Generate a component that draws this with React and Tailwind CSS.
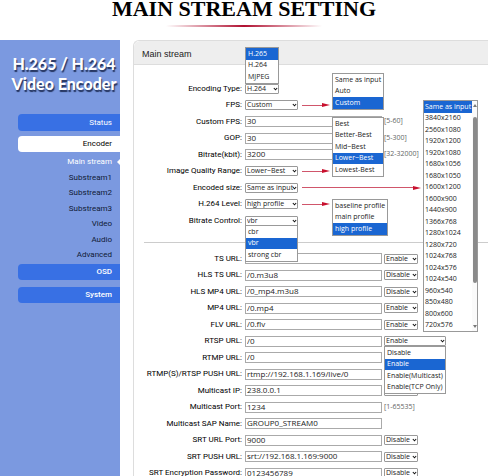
import React from 'react';
import { clsx } from 'clsx';

const SIZES = [
  'Same as input', '3840x2160', '2560x1080', '1920x1200', '1920x1080', '1680x1056', '1680x1050',
  '1600x1200', '1600x900', '1440x900', '1366x768', '1280x1024', '1280x720', '1024x768',
  '1024x576', '1024x540', '960x540', '850x480', '800x600', '720x576',
];

const SUB_PAGES = ['Main stream', 'Substream1', 'Substream2', 'Substream3', 'Video', 'Audio', 'Advanced'];

const OUTPUTS = [
  { id: 'ts', label: 'TS URL:', value: '', state: 'Enable' },
  { id: 'hls-ts', label: 'HLS TS URL:', value: '/0.m3u8', state: 'Disable' },
  { id: 'hls-mp4', label: 'HLS MP4 URL:', value: '/0_mp4.m3u8', state: 'Disable' },
  { id: 'mp4', label: 'MP4 URL:', value: '/0.mp4', state: 'Enable' },
  { id: 'flv', label: 'FLV URL:', value: '/0.flv', state: 'Enable' },
  { id: 'rtsp', label: 'RTSP URL:', value: '/0', state: 'Enable', open: true },
  { id: 'rtmp', label: 'RTMP URL:', value: '/0' },
  { id: 'push', label: 'RTMP(S)/RTSP PUSH URL:', value: 'rtmp://192.168.1.169/live/0' },
  { id: 'mc-ip', label: 'Multicast IP:', value: '238.0.0.1', state: 'Disable' },
  { id: 'mc-port', label: 'Multicast Port:', value: '1234', hint: '[1-65535]' },
  { id: 'mc-sap', label: 'Multicast SAP Name:', value: 'GROUP0_STREAM0' },
  { id: 'srt-port', label: 'SRT URL Port:', value: '9000', state: 'Disable' },
  { id: 'srt-push', label: 'SRT PUSH URL:', value: 'srt://192.168.1.169:9000', state: 'Disable' },
  { id: 'srt-pass', label: 'SRT Encryption Password:', value: '0123456789', state: 'Disable' },
];

const Row = ({ id, label, children }) => (
  <div className="flex h-4 items-center gap-[3px] odd:h-[17px]">
    <label htmlFor={id} className="w-[108px] shrink-0 whitespace-nowrap text-right font-['Roboto',sans-serif] text-[8px] text-black">
      {label}
    </label>
    <div className="relative flex h-full items-center">{children}</div>
  </div>
);

const Field = ({ id, value }) => (
  <input
    id={id}
    defaultValue={value}
    className="h-[11px] w-[137px] shrink-0 border border-[#aaa] bg-white px-px pb-[2px] text-[8px] leading-[8px] text-[#222] outline-none"
  />
);

const Select = ({ id, value, options, className, ...rest }) => (
  <div className={clsx('relative shrink-0', className)}>
    <select
      id={id}
      defaultValue={value}
      className="block h-[10px] w-full appearance-none rounded-[1px] border border-[#999] bg-white pl-px text-[7px] leading-[8px] text-[#222] outline-none"
      {...rest}
    >
      {options.map((o) => <option key={o}>{o}</option>)}
    </select>
    <svg viewBox="0 0 6 4" className="pointer-events-none absolute top-[3px] right-px h-1 w-[5px]" fill="none" stroke="#111" strokeWidth="1.3">
      <path d="M1 .8 3 2.9 5 .8" />
    </svg>
  </div>
);

const OptionList = ({ options, selected, className, scroll }) => (
  <div className={clsx('absolute z-10 flex border border-[#999] bg-white', className)}>
    <ul role="listbox" className="min-w-0 flex-1">
      {options.map((o) => (
        <li
          key={o}
          role="option"
          aria-selected={o === selected}
          className={clsx(
            'flex h-[11px] items-center whitespace-nowrap text-[7px] odd:h-3',
            scroll ? 'pl-px' : 'pl-[2px]',
            o === selected ? 'bg-[#1a66d2] text-white' : 'text-[#222]'
          )}
        >
          {o}
        </li>
      ))}
    </ul>
    {scroll && (
      <div className="flex w-[5px] shrink-0 flex-col items-center justify-between bg-[#fafafa] py-[3px]">
        <svg viewBox="0 0 4 3" className="h-[3px] w-1" fill="#777"><path d="M2 0 4 3H0z" /></svg>
        <div className="mb-auto mt-[10px] h-[74%] w-1 rounded-full bg-[#8a8a8a]" />
        <svg viewBox="0 0 4 3" className="h-[3px] w-1" fill="#777"><path d="M2 3 0 0h4z" /></svg>
      </div>
    )}
  </div>
);

const Arrow = ({ className }) => (
  <div className={clsx('ml-1 flex shrink-0 items-center', className)}>
    <div className="h-px flex-1 bg-[#d0566b]" />
    <svg viewBox="0 0 8 4" className="h-1 w-2" fill="#c8102e"><path d="M0 0 8 2 0 4z" /></svg>
  </div>
);

const Hint = ({ children }) => <span className="ml-[2px] text-[7px] text-[#666]">{children}</span>;

const Sidebar = () => (
  <nav className="flex w-[120px] shrink-0 flex-col bg-[#7b99e0] font-['Roboto',sans-serif] text-[8px] text-[#101a35]">
    <div className="pt-[14px] pl-2 text-center font-['Lato',sans-serif] text-base leading-5 font-black whitespace-nowrap text-white [text-shadow:1px_2px_1px_#24345f]">
      <p>H.265 / H.264</p>
      <p>Video Encoder</p>
    </div>
    <div className="mt-5 ml-[18px] flex flex-col">
      <a href="#status" className="flex h-[17px] items-center justify-end rounded-l-sm bg-[#3870e4] pr-2 text-white">Status</a>
      <a href="#encoder" className="mt-[5px] flex h-4 items-center justify-end rounded-l-sm bg-white pr-2 text-black">Encoder</a>
      <ul className="pt-[2px]">
        {SUB_PAGES.map((page, i) => (
          <li key={page} className="flex h-[15px] items-center justify-end odd:h-4">
            <a href={'#' + page} className={clsx('pr-2', i === 0 && 'relative text-white')}>
              {page}
              {i === 0 && (
                <svg viewBox="0 0 3 6" className="absolute top-[3px] right-0 h-[6px] w-[3px]" fill="#fff"><path d="M3 0v6L0 3z" /></svg>
              )}
            </a>
          </li>
        ))}
      </ul>
      <a href="#osd" className="mt-px flex h-4 items-center justify-end rounded-l-sm bg-[#3870e4] pr-2 font-medium text-white">OSD</a>
      <a href="#system" className="mt-[7px] flex h-4 items-center justify-end rounded-l-sm bg-[#3870e4] pr-2 font-medium text-white">System</a>
    </div>
  </nav>
);

export default function App() {
  return (
    <div className="flex h-screen flex-col overflow-hidden bg-white font-['Open_Sans',sans-serif]">
      <header className="flex h-10 shrink-0 flex-col items-center">
        <h1 className="whitespace-nowrap font-['Liberation_Serif',serif] text-[22px] leading-[18px] font-bold text-black">MAIN STREAM SETTING</h1>
        <div className="mt-[7px] h-[2px] w-[156px] bg-linear-to-r from-transparent via-[#b01030] to-transparent" />
      </header>

      <div className="flex min-h-0 flex-1">
        <Sidebar />
        <main className="ml-[13px] min-w-0 flex-1 rounded-tl-md border-t border-l border-[#ddd]">
          <h2 className="flex h-6 items-center rounded-tl-md border-b border-[#ddd] bg-[#eee] pt-1 pl-2 font-['Liberation_Sans',sans-serif] text-[9px] text-[#222]">Main stream</h2>

          <form>
            <div className="pt-[15px]">
              <Row id="codec" label="Encoding Type:">
                <Select id="codec" value="H.264" options={['H.265', 'H.264', 'MJPEG']} className="w-[34px]" />
                <OptionList options={['H.265', 'H.264', 'MJPEG']} selected="H.265" className="bottom-[13px] left-0 w-[34px]" />
              </Row>
              <Row id="fps" label="FPS:">
                <Select id="fps" value="Custom" options={['Same as input', 'Auto', 'Custom']} className="w-[53px]" />
                <Arrow className="w-7" />
                <OptionList options={['Same as input', 'Auto', 'Custom']} selected="Custom" className="bottom-[3px] left-[87px] w-[52px]" />
              </Row>
              <Row id="custom-fps" label="Custom FPS:">
                <Field id="custom-fps" value="30" />
                <Hint>[5-60]</Hint>
              </Row>
              <Row id="gop" label="GOP:">
                <Field id="gop" value="30" />
                <Hint>[5-300]</Hint>
              </Row>
              <Row id="bitrate" label="Bitrate(kbit):">
                <Field id="bitrate" value="3200" />
                <Hint>[32-32000]</Hint>
              </Row>
              <Row id="quality" label="Image Quality Range:">
                <Select id="quality" value="Lower~Best" options={['Best', 'Lower~Best']} className="w-[53px]" />
                <Arrow className="w-7" />
                <OptionList
                  options={['Best', 'Better-Best', 'Mid~Best', 'Lower~Best', 'Lowest-Best']}
                  selected="Lower~Best"
                  className="bottom-[2px] left-[87px] w-[52px]"
                />
              </Row>
              <Row id="size" label="Encoded size:">
                <Select id="size" value="Same as input" options={SIZES} className="w-[53px]" />
                <Arrow className="w-[119px]" />
                <OptionList options={SIZES} selected="Same as input" scroll className="top-[-79px] left-[178px] w-[55px]" />
              </Row>
              <Row id="level" label="H.264 Level:">
                <Select id="level" value="high profile" options={['baseline profile', 'main profile', 'high profile']} className="w-[53px]" />
                <Arrow className="w-7" />
                <OptionList
                  options={['baseline profile', 'main profile', 'high profile']}
                  selected="high profile"
                  className="top-[3px] left-[87px] w-[56px]"
                />
              </Row>
              <Row id="rate-control" label="Bitrate Control:">
                <Select id="rate-control" value="vbr" options={['cbr', 'vbr', 'strong cbr']} className="w-[53px]" />
                <OptionList options={['cbr', 'vbr', 'strong cbr']} selected="vbr" className="top-[13px] left-0 w-[53px]" />
              </Row>
            </div>

            <hr className="mt-[13px] mb-[7px] ml-[10px] border-[#ccc]" />

            <div>
              {OUTPUTS.map(({ id, label, value, state, hint, open }) => (
                <Row key={id} id={id} label={label}>
                  <Field id={id} value={value} />
                  {state && (
                    <Select
                      aria-label={label + ' state'}
                      value={state}
                      options={['Disable', 'Enable']}
                      className={clsx('ml-[2px]', open ? 'w-[62px]' : 'w-[34px]')}
                    />
                  )}
                  {open && (
                    <OptionList
                      options={['Disable', 'Enable', 'Enable(Multicast)', 'Enable(TCP Only)']}
                      selected="Enable"
                      className="top-[13px] left-[139px] w-[62px]"
                    />
                  )}
                  {hint && <Hint>{hint}</Hint>}
                </Row>
              ))}
            </div>
          </form>
        </main>
      </div>
    </div>
  );
}
